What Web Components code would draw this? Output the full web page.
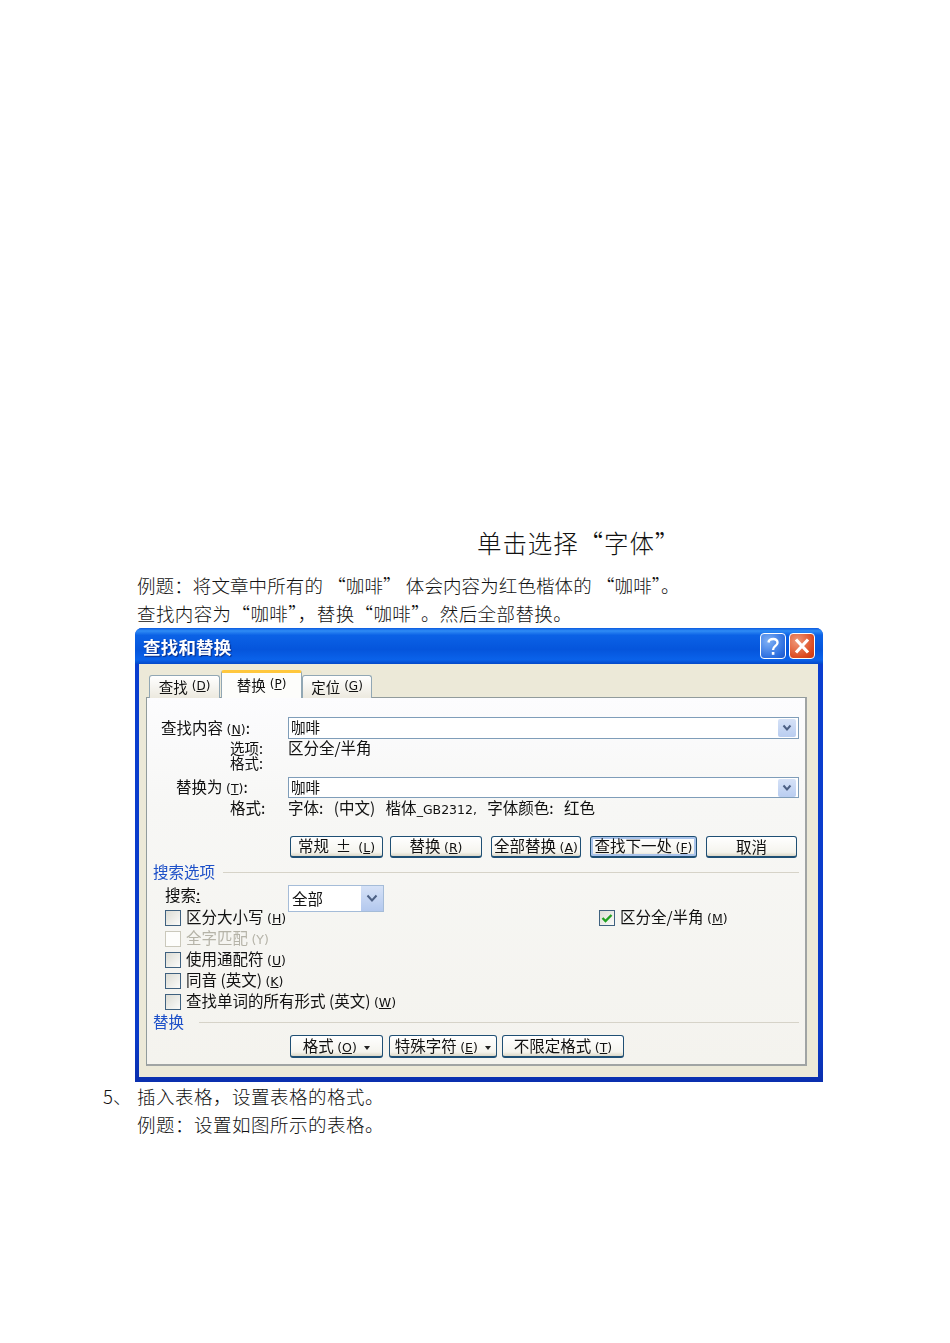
<!DOCTYPE html>
<html lang="zh-CN">
<head>
<meta charset="utf-8">
<title>查找和替换</title>
<style>
html,body{margin:0;background:#fff}
body{font-family:"Noto Sans CJK SC","Liberation Serif",sans-serif;color:#111}
</style>
</head>
<body>
<doc-page>
  <doc-heading>单击选择“字体”</doc-heading>
  <doc-line ls="0.1">例题：将文章中所有的 “咖啡” 体会内容为红色楷体的 “咖啡”。</doc-line>
  <doc-line ls="0.4">查找内容为“咖啡”，替换“咖啡”。然后全部替换。</doc-line>
  <xp-dialog caption="查找和替换">
    <xp-tabs slot="tabs"></xp-tabs>
    <xp-panel slot="panel">
      <xp-row h="22" mt="19">
        <xp-label pl="14">查找内容 <xp-key>(<u>N</u>)</xp-key>:</xp-label>
        <xp-combo value="咖啡"></xp-combo>
      </xp-row>
      <xp-row h="31" top>
        <xp-label pl="83" fs="14.5" lh="15" mt="1">选项:<br>格式:</xp-label>
        <xp-text mt="1">区分全/半角</xp-text>
      </xp-row>
      <xp-row h="21" mt="7">
        <xp-label pl="29">替换为 <xp-key>(<u>T</u>)</xp-key>:</xp-label>
        <xp-combo value="咖啡"></xp-combo>
      </xp-row>
      <xp-row h="20"><xp-label pl="83">格式:</xp-label><xp-text>字体:&nbsp;&nbsp;&nbsp;(中文)&nbsp;&nbsp;&nbsp;楷体<xp-key>_GB2312,</xp-key>&nbsp;&nbsp;&nbsp;字体颜色:&nbsp;&nbsp;&nbsp;红色</xp-text></xp-row>
      <xp-buttons mt="18" h="22">
        <xp-button w="93">常规&nbsp;&nbsp;±&nbsp;&nbsp;<xp-key>(<u>L</u>)</xp-key></xp-button>
        <xp-button w="92" ml="7">替换 <xp-key>(<u>R</u>)</xp-key></xp-button>
        <xp-button w="90" ml="9">全部替换 <xp-key>(<u>A</u>)</xp-key></xp-button>
        <xp-button w="107" ml="9" focus>查找下一处 <xp-key>(<u>F</u>)</xp-key></xp-button>
        <xp-button w="91" ml="9">取消</xp-button>
      </xp-buttons>
      <xp-section mt="4" gap="8">搜索选项</xp-section>
      <xp-row h="22" mt="3">
        <xp-label pl="18" mb="2">搜索<u>:</u></xp-label>
        <xp-select>全部</xp-select>
      </xp-row>
      <xp-checks>
        <xp-check>区分大小写 <xp-key>(<u>H</u>)</xp-key></xp-check>
        <xp-check checked>区分全/半角 <xp-key>(<u>M</u>)</xp-key></xp-check>
        <xp-check disabled>全字匹配 <xp-key>(Y)</xp-key></xp-check><span></span>
        <xp-check>使用通配符 <xp-key>(<u>U</u>)</xp-key></xp-check><span></span>
        <xp-check>同音 (英文) <xp-key>(<u>K</u>)</xp-key></xp-check><span></span>
        <xp-check>查找单词的所有形式 (英文) <xp-key>(<u>W</u>)</xp-key></xp-check><span></span>
      </xp-checks>
      <xp-section gap="15">替换</xp-section>
      <xp-buttons mt="3" h="23">
        <xp-button w="93">格式 <xp-key>(<u>O</u>)</xp-key> <xp-caret></xp-caret></xp-button>
        <xp-button w="108" ml="6">特殊字符 <xp-key>(<u>E</u>)</xp-key> <xp-caret></xp-caret></xp-button>
        <xp-button w="122" ml="5">不限定格式 <xp-key>(<u>T</u>)</xp-key></xp-button>
      </xp-buttons>
    </xp-panel>
  </xp-dialog>
  <doc-line num="5、" ls="0.5">插入表格，设置表格的格式。</doc-line>
  <doc-line ls="0.5">例题：设置如图所示的表格。</doc-line>
</doc-page>
<script>
function def(name, css, html, extra){
  customElements.define(name, class extends HTMLElement{
    constructor(){super();this.attachShadow({mode:'open'})}
    connectedCallback(){
      const a=n=>this.getAttribute(n);
      this.shadowRoot.innerHTML='<style>'+css+'</style>'+(typeof html==='function'?html(a,this):html);
      if(extra)extra(this,a);
    }
  });
}
const boxVars=(el,a)=>{
  if(a('h'))el.style.height=a('h')+'px';
  if(a('mt'))el.style.marginTop=a('mt')+'px';
  if(a('mb'))el.style.marginBottom=a('mb')+'px';
  if(a('ml'))el.style.marginLeft=a('ml')+'px';
  if(a('w'))el.style.width=a('w')+'px';
  if(a('pl'))el.style.paddingLeft=a('pl')+'px';
  if(a('fs'))el.style.fontSize=a('fs')+'px';
  if(a('lh'))el.style.lineHeight=a('lh')+'px';
};
def('doc-page',':host{display:block;padding:527px 0 0 0;height:816px}','<slot></slot>');
def('doc-heading',':host{display:block;margin-left:477px;font-size:24.5px;line-height:32px;height:44px;color:#111;font-weight:300;letter-spacing:.9px;white-space:nowrap}','<slot></slot>');
def('doc-line',':host{display:flex;margin-left:103px;font-size:18.5px;line-height:28px;height:28px;color:#111;font-weight:300;white-space:nowrap}.n{width:34px;letter-spacing:0}',
  a=>'<span class="n">'+(a('num')||'')+'</span><span style="letter-spacing:'+(a('ls')||0)+'px"><slot></slot></span>',boxVars);
def('xp-dialog',`:host{display:flex;flex-direction:column;box-sizing:border-box;width:688px;height:454px;margin:1px 0 0 135px;background:linear-gradient(#0a3ed0,#0a3ac8 90%,#0a2fae);border-radius:7px 7px 0 0;filter:blur(.35px);overflow:hidden}
.bar{height:36px;flex:none;display:flex;align-items:center;padding:0 8px 0 8px;background:linear-gradient(#0b5ae0 0,#2f8cf5 8%,#0b62e6 20%,#0555dc 60%,#0a62ea 88%,#0348c8 100%);}
.cap{flex:1;color:#fff;font-size:17.5px;font-weight:700;text-shadow:1px 1px 1px #0a2a80;letter-spacing:.2px}
.tb{width:26px;height:26px;box-sizing:border-box;border:1px solid #fff;border-radius:4px;margin-left:3px}
.tb svg{display:block;width:24px;height:24px}
.help{background:radial-gradient(circle at 30% 30%,#7fb0f5,#2d6fe0 70%,#1b55c8)}
.close{background:radial-gradient(circle at 30% 30%,#f09a7a,#dc4a20 70%,#c83410)}
.body{flex:1;margin:0 5px 5px 4px;background:#ece9d8;padding:0 11px 0 7px;display:flex;flex-direction:column;box-sizing:border-box;min-height:0}`,
 a=>`<div class="bar"><span class="cap">${a('caption')}</span>
 <span class="tb help"><svg viewBox="0 0 24 24"><path d="M7.5 8.5 C8 4 17 3.500 16.500 9 C16.200 12 12 12 12 16" fill="none" stroke="#fff" stroke-width="2.400"/><rect x="10.800" y="18" width="2.600" height="2.800" fill="#fff"/></svg></span>
 <span class="tb close"><svg viewBox="0 0 24 24"><path d="M6 5.500 L18 18.500 M18 5.500 L6 18.500" stroke="#fff" stroke-width="3.200" fill="none"/></svg></span></div>
 <div class="body"><slot name="tabs"></slot><slot name="panel"></slot></div>`);
def('xp-tabs',`:host{display:flex;align-items:flex-end;height:34px;flex:none;padding-left:3px;position:relative;z-index:1;margin-bottom:-1px;font-size:14.500px;color:#111}
.t{box-sizing:border-box;height:23px;border:1px solid #91a7b4;border-bottom:0;border-radius:3px 3px 0 0;background:linear-gradient(#fff,#ece9df);display:flex;align-items:center;justify-content:center;white-space:nowrap;padding-bottom:2px}
.a{width:81px;border:1px solid #91a7b4;border-top:3px solid #ffc73c;border-bottom:0;background:#fdfdfb;margin-left:1px;padding-bottom:3px;height:28px}
u{text-underline-offset:1px}
k{font:12px "DejaVu Sans",sans-serif;margin-left:4px}`,
`<div class="t" style="width:71px">查找<k>(<u>D</u>)</k></div><div class="t a">替换<k>(<u>P</u>)</k></div><div class="t" style="width:70px">定位<k>(<u>G</u>)</k></div>`);
def('xp-panel',`:host{display:flex;flex-direction:column;box-sizing:border-box;width:661px;height:369px;border:1px solid #919b9c;border-right-width:2px;border-bottom-width:2px;border-color:#919b9c #a0a4a4 #a0a4a4 #919b9c;background:linear-gradient(#fcfcfe 0,#f7f7f5 30%,#f4f3ee 100%);font-size:15.500px;color:#111;line-height:1}`,'<slot></slot>');
def('xp-row',':host{display:flex;align-items:center;flex:none}:host([top]){align-items:flex-start}','<slot></slot>',boxVars);
def('xp-label',':host{display:block;flex:none;box-sizing:border-box;width:141px;white-space:nowrap}','<slot></slot>',boxVars);
def('xp-text',':host{display:block;white-space:nowrap}','<slot></slot>',boxVars);
def('xp-key',':host{font:12.500px "DejaVu Sans",sans-serif;color:inherit}','<slot></slot>');
def('xp-combo',`:host{display:flex;align-items:center;box-sizing:border-box;width:511px;height:100%;border:1px solid #7f9db9;background:#fff;padding:0 2px 0 2px;font-size:14.500px}
.v{flex:1;margin-top:-1px}.b{width:18px;height:18px;background:linear-gradient(#d6e2f7,#b9cdf0);border-radius:2px;display:flex;align-items:center;justify-content:center}`,
 a=>`<span class="v">${a('value')}</span><span class="b"><svg width="10" height="8" viewBox="0 0 10 8"><path d="M1.500 1.500 L5 5.500 L8.500 1.500" fill="none" stroke="#4d6185" stroke-width="2"/></svg></span>`);
def('xp-select',`:host{display:flex;align-items:center;box-sizing:border-box;width:96px;height:27px;margin-bottom:-5px;border:1px solid #a5bcd8;background:#fff;padding-left:3px;position:relative;z-index:1}
.v{flex:1}.b{width:22px;height:25px;background:linear-gradient(#d6e2f7,#b3c8ee);display:flex;align-items:center;justify-content:center}`,
 `<span class="v"><slot></slot></span><span class="b"><svg width="12" height="9" viewBox="0 0 12 9"><path d="M1.500 1.500 L6 6.500 L10.500 1.500" fill="none" stroke="#4d6185" stroke-width="2"/></svg></span>`);
def('xp-buttons',':host{display:flex;flex:none;padding-left:143px}','<slot></slot>',boxVars);
def('xp-button',`:host{display:flex;align-items:center;justify-content:center;box-sizing:border-box;flex:none;height:100%;border:1px solid #1f4f74;border-bottom-width:2px;border-radius:3px;background:linear-gradient(#fff,#f5f4ee 80%,#dcd8c8);white-space:nowrap;gap:0}
:host([focus]){box-shadow:inset 0 0 0 2px #a9c3ea}`,'<span><slot></slot></span>',boxVars);
def('xp-caret',':host{display:inline-block;width:0;height:0;border:3.500px solid transparent;border-top:4px solid #222;border-bottom:0;margin-left:4px;vertical-align:2px}','');
def('xp-section',`:host{display:flex;align-items:center;flex:none;height:20px;padding:0 6px 0 6px;color:#1d50c8;font-size:15.500px}
.l{flex:1;height:1px;background:#d6d3c8}`,a=>`<span style="margin-right:${a('gap')}px"><slot></slot></span><span class="l"></span>`,boxVars);
def('xp-checks',':host{display:grid;grid-template-columns:434px 1fr;grid-auto-rows:21px;padding-left:18px;flex:none}','<slot></slot>');
def('xp-check',`:host{display:flex;align-items:center;white-space:nowrap;gap:5px}
.b{flex:none;box-sizing:border-box;width:16px;height:16px;border:1px solid #3f617f;background:linear-gradient(135deg,#dcdcd4,#fbfbf9);display:flex;align-items:center;justify-content:center}
:host([disabled]){color:#b5b3a8}:host([disabled]) .b{border-color:#cac8bb;background:#fdfdfb}`,
 a=>`<span class="b">${a('checked')!==null?'<svg width="12" height="10" viewBox="0 0 12 10"><path d="M1.500 5 L4.500 8 L10.500 2" fill="none" stroke="#21a121" stroke-width="2.400"/></svg>':''}</span><span><slot></slot></span>`);
</script>
</body>
</html>
